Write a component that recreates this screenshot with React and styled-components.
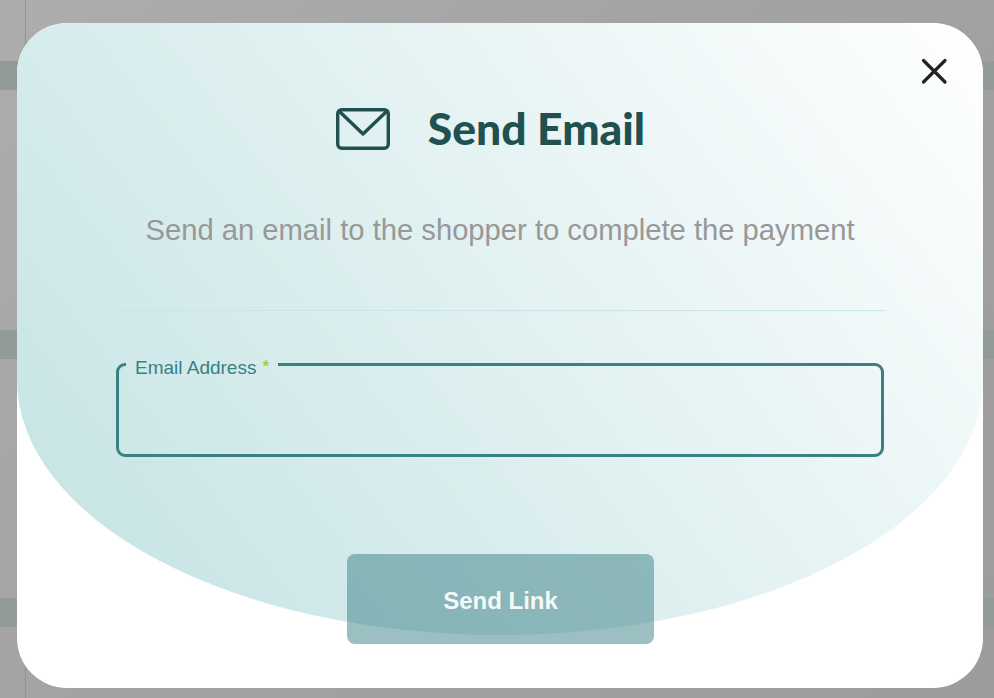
import React from "react"
import styled, { createGlobalStyle } from "styled-components"

const GlobalStyle = createGlobalStyle`
	html, body {
		margin: 0;
		padding: 0;
		height: 100%;
	}
	body {
		font-family: "Liberation Sans", Arial, sans-serif;
		overflow: hidden;
	}
`

const Page = styled.div`
	position: relative;
	width: 994px;
	height: 698px;
	overflow: hidden;
	background: linear-gradient(135deg, #adadad 0%, #a3a3a3 45%, #9c9c9c 100%);
	padding-top: 61px;
	box-sizing: border-box;
	display: flex;
	flex-direction: column;
	gap: 239.5px;
`

const SideRule = styled.div`
	position: absolute;
	left: 25px;
	top: 0;
	bottom: 0;
	width: 1px;
	background: #939393;
`

const TableBand = styled.div`
	height: 29px;
	background: #929a9a;
	flex: none;
`

const Modal = styled.div`
	position: absolute;
	left: 17px;
	top: 23px;
	width: 966px;
	height: 665px;
	border-radius: 50px;
	background: #fff;
	overflow: hidden;
	box-sizing: border-box;
	padding: 85px 99px 44px;
	display: flex;
	flex-direction: column;
	align-items: center;

	&::before {
		content: "";
		position: absolute;
		left: 0;
		top: 0;
		width: 100%;
		height: 612px;
		border-radius: 50px 50px 50% 50% / 50px 50px 255px 255px;
		background: linear-gradient(232deg, #ffffff 0%, #c2e2e3 100%);
	}
`

const CloseButton = styled.button`
	position: absolute;
	top: 32px;
	right: 33px;
	width: 32px;
	height: 32px;
	padding: 0;
	border: 0;
	background: none;
	cursor: pointer;
	display: flex;
	z-index: 1;
`

const Heading = styled.h2`
	position: relative;
	margin: -1px 0 0;
	height: 42px;
	display: flex;
	align-items: center;
	gap: 38px;
	padding-right: 19px;
	color: #215050;
	font-family: Lato, "Noto Sans", sans-serif;
	font-weight: 900;
	font-size: 44.4px;
	line-height: 42px;

	svg {
		margin-top: 2px;
	}
`

const Subtitle = styled.p`
	position: relative;
	margin: 64px 0 0;
	color: #989898;
	font-size: 29.2px;
	line-height: 34px;
	white-space: nowrap;
`

const Divider = styled.hr`
	position: relative;
	align-self: stretch;
	margin: 63px -1px 0 -2px;
	border: 0;
	height: 1px;
	background: #c8e6e6;
`

const Field = styled.fieldset`
	position: relative;
	align-self: stretch;
	margin: 40px 0 0;
	padding: 0 0 0 7px;
	height: 106px;
	box-sizing: border-box;
	border: 3px solid #3a8085;
	border-radius: 9px;
	min-width: 0;
`

const Legend = styled.legend`
	padding: 6px 9px 0 9px;
	font-size: 19px;
	line-height: 20px;
	color: #3a8085;

	span {
		color: #a9cc3c;
		font-size: 16px;
		font-weight: 700;
		vertical-align: 2px;
		margin-left: 1px;
	}
`

const EmailInput = styled.input`
	display: block;
	width: 100%;
	height: 60px;
	border: 0;
	outline: 0;
	background: transparent;
	font: inherit;
`

const SubmitButton = styled.button`
	position: relative;
	margin-top: 97px;
	width: 307px;
	height: 90px;
	flex: none;
	margin-left: 1px;
	padding: 3px 0 0;
	border: 0;
	border-radius: 8px;
	background: rgba(58, 128, 133, 0.5);
	color: #f6f8f8;
	font-family: inherit;
	font-weight: 700;
	font-size: 24px;
	cursor: not-allowed;
`

const EnvelopeIcon = () => (
	<svg width="54" height="42" viewBox="0 0 54 42" fill="none" stroke="#215050" strokeWidth="3.4" strokeLinejoin="round" strokeLinecap="round">
		<rect x="1.7" y="1.7" width="50.6" height="38.6" rx="4" />
		<path d="M3 3l24 23L51 3" />
	</svg>
)

const CloseIcon = () => (
	<svg width="32" height="32" viewBox="0 0 32 32" fill="none" stroke="#222" strokeWidth="3.2" strokeLinecap="round">
		<path d="M5.5 5.5l21.5 21.5M27 5.5L5.5 27" />
	</svg>
)

const App = () => {
	return (
		<>
			<GlobalStyle />
			<Page>
				<SideRule />
				<TableBand />
				<TableBand />
				<TableBand />
				<Modal>
					<CloseButton aria-label="Close"><CloseIcon /></CloseButton>
					<Heading><EnvelopeIcon />Send Email</Heading>
					<Subtitle>Send an email to the shopper to complete the payment</Subtitle>
					<Divider />
					<Field>
						<Legend>Email Address <span>*</span></Legend>
						<EmailInput type="email" />
					</Field>
					<SubmitButton disabled>Send Link</SubmitButton>
				</Modal>
			</Page>
		</>
	)
}

export default App
